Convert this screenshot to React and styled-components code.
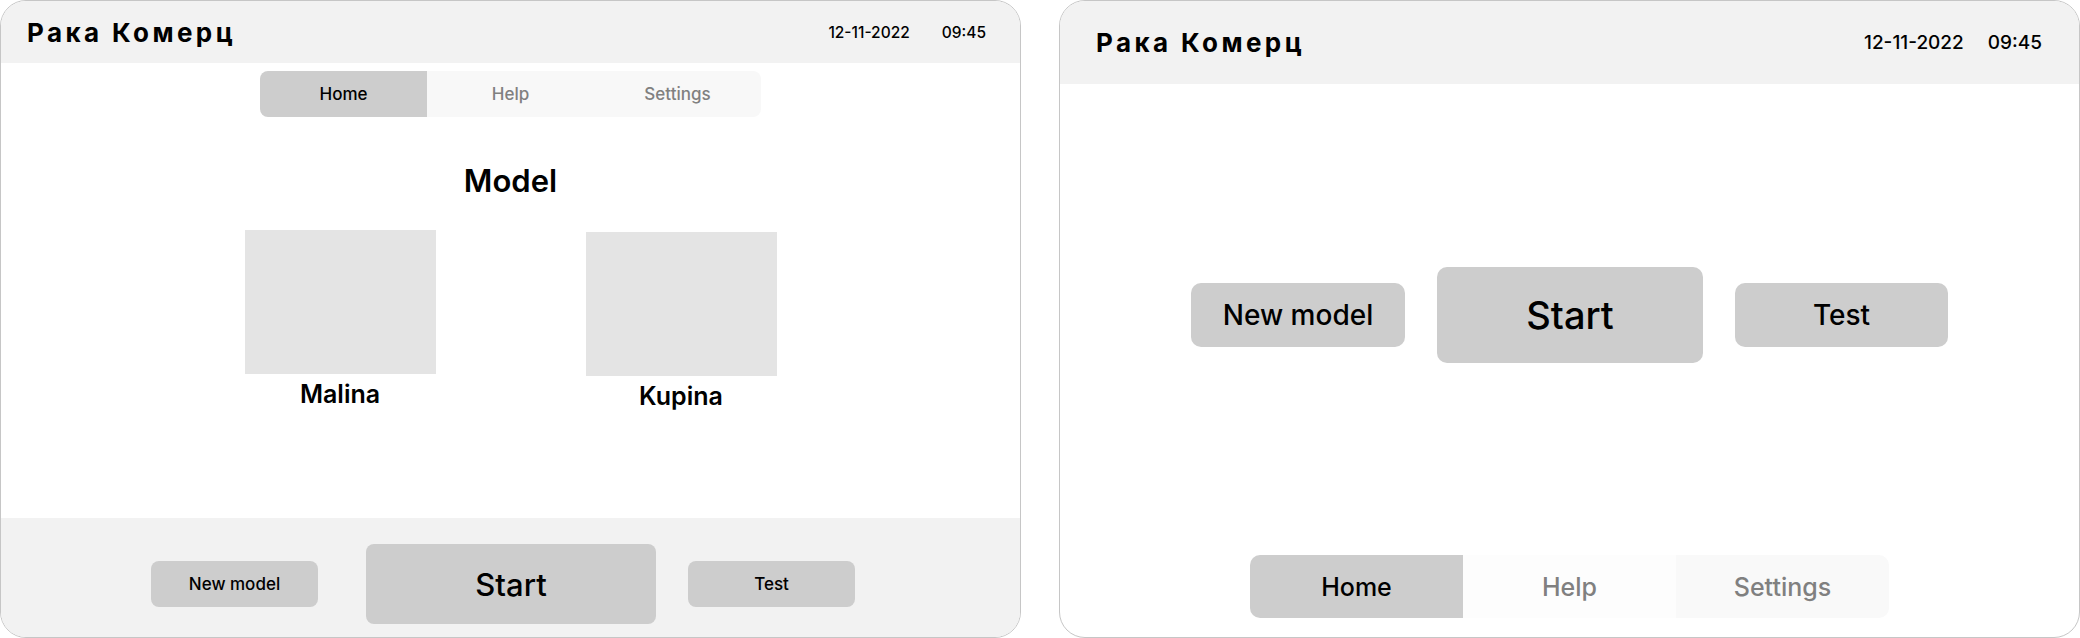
import React from "react";
import styled, { createGlobalStyle } from "styled-components";

const GlobalStyle = createGlobalStyle`
  html, body {
    margin: 0;
    padding: 0;
    background: #ffffff;
  }
  body {
    font-family: Inter, "Noto Sans", "DejaVu Sans", sans-serif;
    color: #000;
  }
  * {
    box-sizing: border-box;
  }
`;

function Header({ tall }) {
  return (
    <TopBar $tall={tall}>
      <Brand>Рака Комерц</Brand>
      <Clock $tall={tall}>
        <span>12-11-2022</span>
        <span>09:45</span>
      </Clock>
    </TopBar>
  );
}

function Tabs({ big, shades }) {
  const items = ["Home", "Help", "Settings"];
  return (
    <TabBar $big={big}>
      {items.map((name, i) => (
        <Tab key={name} $big={big} $active={i === 0} $bg={shades[i]}>
          {name}
        </Tab>
      ))}
    </TabBar>
  );
}

function App() {
  return (
    <>
      <GlobalStyle />
      <Screens>
        <Panel>
          <Header />
          <Tabs shades={["#cdcdcd", "#f8f8f8", "#f8f8f8"]} />
          <Title>Model</Title>
          <Models>
            <ModelCard>
              <Thumb />
              <ModelName>Malina</ModelName>
            </ModelCard>
            <ModelCard $shift={2}>
              <Thumb />
              <ModelName>Kupina</ModelName>
            </ModelCard>
          </Models>
          <Footer>
            <Button $w={167} $h={46} $size={17}>
              New model
            </Button>
            <Button $w={290} $h={80} $size={31}>
              Start
            </Button>
            <Button $w={167} $h={46} $size={17}>
              Test
            </Button>
          </Footer>
        </Panel>

        <Panel>
          <Header tall />
          <Actions>
            <Button $w={214} $h={64} $size={28} $radius={10}>
              New model
            </Button>
            <Button $w={266} $h={96} $size={38} $radius={10}>
              Start
            </Button>
            <Button $w={213} $h={64} $size={28} $radius={10}>
              Test
            </Button>
          </Actions>
          <Tabs big shades={["#cdcdcd", "#fdfdfd", "#f9f9f9"]} />
        </Panel>
      </Screens>
    </>
  );
}

const Screens = styled.div`
  display: flex;
  gap: 38px;
  width: 2080px;
  height: 638px;
`;

const Panel = styled.div`
  width: 1021px;
  height: 638px;
  border: 1px solid #c6c6c6;
  border-radius: 26px;
  overflow: hidden;
  display: flex;
  flex-direction: column;
  align-items: center;
  background: #fff;
`;

const TopBar = styled.div`
  align-self: stretch;
  height: ${(p) => (p.$tall ? "83px" : "62px")};
  flex-shrink: 0;
  background: #f2f2f2;
  display: flex;
  align-items: center;
  justify-content: space-between;
  padding: ${(p) => (p.$tall ? "0 37px 0 36px" : "0 34px 0 26px")};
`;

const Brand = styled.div`
  font-size: 26px;
  font-weight: 700;
  letter-spacing: 3.4px;
  white-space: nowrap;
`;

const Clock = styled.div`
  display: flex;
  gap: ${(p) => (p.$tall ? "24px" : "32px")};
  font-size: ${(p) => (p.$tall ? "19px" : "15.5px")};
  font-weight: 500;
  white-space: nowrap;
`;

const TabBar = styled.div`
  display: flex;
  flex-shrink: 0;
  margin-top: ${(p) => (p.$big ? "0" : "8px")};
  margin-bottom: ${(p) => (p.$big ? "19px" : "0")};
  border-radius: ${(p) => (p.$big ? "10px" : "8px")};
  overflow: hidden;
`;

const Tab = styled.div`
  width: ${(p) => (p.$big ? "213px" : "167px")};
  height: ${(p) => (p.$big ? "63px" : "46px")};
  display: flex;
  align-items: center;
  justify-content: center;
  background: ${(p) => p.$bg};
  color: ${(p) => (p.$active ? "#000" : "#808080")};
  font-size: ${(p) => (p.$big ? "25px" : "17px")};
  font-weight: 500;
`;

const Title = styled.h1`
  margin: 46px 0 0;
  font-size: 31px;
  font-weight: 600;
  line-height: 36px;
`;

const Models = styled.div`
  display: flex;
  gap: 150px;
  margin-top: 31px;
`;

const ModelCard = styled.div`
  display: flex;
  flex-direction: column;
  align-items: center;
  margin-top: ${(p) => p.$shift || 0}px;
`;

const Thumb = styled.div`
  width: 191px;
  height: 144px;
  background: #e4e4e4;
`;

const ModelName = styled.div`
  margin-top: 6px;
  font-size: 25px;
  font-weight: 600;
  line-height: 29px;
`;

const Footer = styled.div`
  margin-top: auto;
  align-self: stretch;
  height: 119px;
  background: #f2f2f2;
  display: flex;
  align-items: center;
  justify-content: center;
  padding: 13px 15px 0 0;
  gap: 40px;

  & > :nth-child(2) {
    margin: 0 -8px 0 8px;
  }
`;

const Actions = styled.div`
  flex: 1;
  display: flex;
  align-items: center;
  justify-content: center;
  gap: 32px;
  padding-bottom: 10px;
`;

const Button = styled.button`
  width: ${(p) => p.$w}px;
  height: ${(p) => p.$h}px;
  border: none;
  border-radius: ${(p) => p.$radius || 8}px;
  background: #cdcdcd;
  color: #000;
  font-family: inherit;
  font-size: ${(p) => p.$size}px;
  font-weight: 500;
  padding: 0;
  cursor: pointer;
`;

export default App;
